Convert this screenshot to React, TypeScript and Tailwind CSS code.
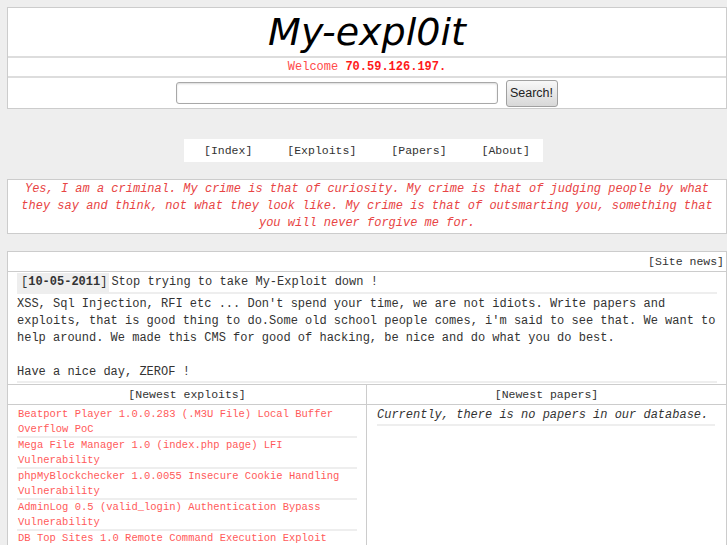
import React from "react";

const exploits = [
  "Beatport Player 1.0.0.283 (.M3U File) Local Buffer Overflow PoC",
  "Mega File Manager 1.0 (index.php page) LFI Vulnerability",
  "phpMyBlockchecker 1.0.0055 Insecure Cookie Handling Vulnerability",
  "AdminLog 0.5 (valid_login) Authentication Bypass Vulnerability",
  "DB Top Sites 1.0 Remote Command Execution Exploit",
];

const navLinks = ["[Index]", "[Exploits]", "[Papers]", "[About]"];

export default function App() {
  return (
    <div className="min-h-screen bg-[#eeeeee] pt-[7px] font-['Liberation_Mono',monospace] text-[#333]">
      {/* header */}
      <div className="ml-[7px] w-[720px] border border-[#ccc] bg-white">
        <div className="h-[50px] border-b-2 border-[#ddd] text-center font-['DejaVu_Sans',sans-serif] text-[38px] italic leading-[48px] text-black">
          My-expl0it
        </div>
        <div className="h-[20px] border-b-2 border-[#ddd] text-center text-[12px] leading-[18px]">
          <span className="text-[#ff4a4a]">Welcome </span>
          <span className="font-bold text-[#ff1a1a]">70.59.126.197.</span>
        </div>
        <div className="flex h-[30px] items-center justify-center gap-[8px] pr-[1px]">
          <input
            type="text"
            className="h-[22px] w-[322px] rounded-[3px] border border-[#a8a8a8] bg-white shadow-[inset_0_1px_2px_rgba(0,0,0,0.15)]"
          />
          <button className="h-[27px] w-[52px] rounded-[3px] border border-[#a0a0a0] bg-gradient-to-b from-[#f8f8f8] to-[#d8d8d8] font-['Liberation_Sans',sans-serif] text-[12.5px] text-[#222]">
            Search!
          </button>
        </div>
      </div>

      {/* nav */}
      <div className="ml-[184px] mt-[30px] flex h-[23px] w-[359px] items-center gap-[35px] bg-white pl-[20px] text-[11.5px] leading-[23px] text-[#333]">
        {navLinks.map((link) => (
          <span key={link}>{link}</span>
        ))}
      </div>

      {/* quote */}
      <div className="ml-[7px] mt-[17px] w-[720px] border border-[#ccc] bg-white py-[1px] text-center text-[12px] italic leading-[17px] text-[#e84444]">
        Yes, I am a criminal. My crime is that of curiosity. My crime is that of judging people by what they say and
        think, not what they look like. My crime is that of outsmarting you, something that you will never forgive me
        for.
      </div>

      {/* news */}
      <div className="ml-[7px] mt-[17px] w-[720px] border border-[#ccc] bg-white pb-[20px]">
        <div className="h-[20px] border-b border-[#ccc] pr-[2px] text-right text-[11.5px] leading-[19px]">
          [Site news]
        </div>
        <div className="px-[9px] pt-[1px]">
          <div className="flex h-[21px] items-start border-b-2 border-[#eee] text-[12px] leading-[19px]">
            <span className="bg-[#eee] pl-[4px] pr-[2px]">
              [<b>10-05-2011</b>]
            </span>
            <span className="ml-[2px]">Stop trying to take My-Exploit down !</span>
          </div>
          <div className="border-b-2 border-[#eee] pt-[2px] text-[12px] leading-[17px]">
            XSS, Sql Injection, RFI etc ... Don't spend your time, we are not idiots. Write papers and exploits, that is
            good thing to do.Some old school people comes, i'm said to see that. We want to help around. We made this
            CMS for good of hacking, be nice and do what you do best.
            <br />
            <br />
            Have a nice day, ZEROF !
          </div>
        </div>

        <div className="mt-[1px] grid grid-cols-[359px_1fr] border-t border-[#ccc]">
          <div className="h-[20px] border-b border-r border-[#ccc] text-center text-[11.5px] leading-[19px]">
            [Newest exploits]
          </div>
          <div className="h-[20px] border-b border-[#ccc] text-center text-[11.5px] leading-[19px]">
            [Newest papers]
          </div>
          <div className="border-r border-[#ccc] px-[9px] pt-[2px]">
            {exploits.map((item) => (
              <div
                key={item}
                className="border-b-2 border-[#eee] pl-[1px] text-[10.5px] leading-[14.5px] text-[#ff5a5a]"
              >
                {item}
              </div>
            ))}
          </div>
          <div className="pl-[10px] pr-[11px] pt-[2px]">
            <div className="border-b-2 border-[#eee] text-[12px] italic leading-[17px]">
              Currently, there is no papers in our database.
            </div>
          </div>
        </div>
      </div>
    </div>
  );
}
